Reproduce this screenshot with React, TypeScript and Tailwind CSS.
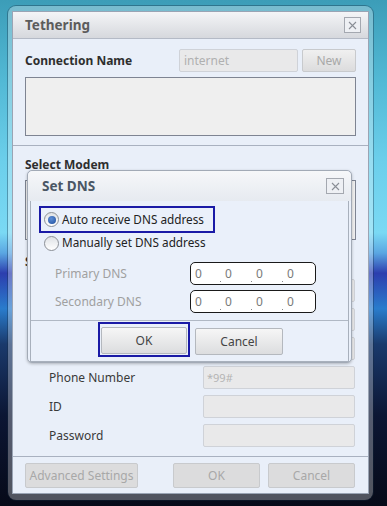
import React from 'react';

const font = "font-['Noto_Sans','Open_Sans',sans-serif]";

const CloseBox = ({ className = "" }: { className?: string }) => (
  <div className={`flex items-center justify-center border border-[#a4a8b0] bg-[#eef0f4] ${className}`}>
    <svg width="9" height="9" viewBox="0 0 9 9">
      <path d="M1 1 L8 8 M8 1 L1 8" stroke="#8a8e96" strokeWidth="1.1" fill="none" />
    </svg>
  </div>
);

const Field = ({ value = "" }: { value?: string }) => (
  <div className="w-[152px] h-[23px] rounded-[2px] border border-[#cfd2d8] bg-[#e9e9ea] px-[3px] text-[11px] leading-[21px] text-[#b4b4b4]">
    {value}
  </div>
);

const Radio = ({ checked }: { checked?: boolean }) => (
  <span className="flex w-[15px] h-[15px] shrink-0 items-center justify-center rounded-full border border-[#8c9096] bg-[linear-gradient(180deg,#dfe2e6,#ffffff)]">
    {checked && <span className="w-[8px] h-[8px] rounded-full bg-[radial-gradient(circle_at_40%_35%,#5d8ed6,#1f4f9e)]" />}
  </span>
);

const IpBox = () => (
  <div className="flex w-[126px] h-[23px] items-center rounded-[5px] border-[1.5px] border-[#1a1a1a] bg-white pl-[4px] text-[12px] text-[#7a7a7a]">
    <span className="w-[25px]">0</span>
    {[0, 1, 2].map((i) => (
      <span key={i} className="flex w-[31px] items-end">
        <span className="mr-[4px] mb-[1px] w-[1px] h-[1px] bg-[#8a8a8a] self-end" />
        <span>0</span>
      </span>
    ))}
  </div>
);

const btn =
  "flex items-center justify-center rounded-[2px] border border-[#b4b8be] bg-[linear-gradient(180deg,#f6f6f6,#dcdddf)] text-[12px] text-[#444]";
const btnOff =
  "flex items-center justify-center rounded-[2px] border border-[#c8cacd] bg-[#dcdcdd] text-[12px] text-[#a8a8a8]";

export default function App() {
  // first three rows sit under the Set DNS dialog, their labels are not visible
  const rows = ["", "", "", "Phone Number", "ID", "Password"];
  return (
    <div
      className={`relative w-[387px] h-[506px] overflow-hidden pt-[6px] pl-[8px] ${font} bg-[linear-gradient(180deg,#3c9db8_0%,#52b9d5_16%,#6ccfeb_32%,#7ad9f4_46%,#5aa6e2_50%,#2c3eae_54%,#2a7ccc_61%,#1a3a6c_68%,#0c1634_82%,#060a18_100%)]`}
    >
      {/* outer window frame */}
      <div className="w-[365px] h-[494px] rounded-[8px] bg-white/30 px-[4px] py-[5px] shadow-[0_0_0_1px_rgba(20,40,60,0.35)]">
        <div className="flex flex-col w-[357px] h-[483px] bg-[#e9eff9] border border-[#9aa4b4]">
          {/* title bar */}
          <div className="flex h-[27px] shrink-0 items-center justify-between border-b border-[#b4bac6] bg-[linear-gradient(180deg,#f4f5f7,#d6d8dd)] pl-[12px] pr-[7px]">
            <span className="text-[13.5px] font-bold text-[#5c5c5c]">Tethering</span>
            <CloseBox className="w-[17px] h-[16px]" />
          </div>

          {/* connection name */}
          <div className="px-[12px] pt-[10px]">
            <div className="flex h-[23px] items-center">
              <span className="w-[154px] text-[12px] font-bold text-[#2e2e2e]">Connection Name</span>
              <div className="w-[119px] h-[23px] rounded-[2px] border border-[#cfd2d8] bg-[#e9e9ea] px-[4px] text-[12px] leading-[21px] text-[#b0b0b0]">
                internet
              </div>
              <div className={`${btnOff} ml-[4px] w-[54px] h-[23px] bg-[linear-gradient(180deg,#f0f0f0,#dcdcdd)] text-[#9a9a9a]`}>New</div>
            </div>
            <div className="mt-[5px] h-[59px] w-[331px] border border-[#7e8492] bg-[#efefef]" />
          </div>
          <div className="mt-[9px] h-px bg-[#a9b1c0]" />

          {/* select modem */}
          <div className="px-[12px] pt-[11px]">
            <div className="h-[16px] text-[12px] font-bold leading-[16px] text-[#2e2e2e]">Select Modem</div>
            <div className="mt-[7px] h-[60px] w-[331px] border border-[#7e8492] bg-[#efefef]" />
            <div className="mt-[14px] h-[16px] text-[12px] font-bold leading-[16px] text-[#2e2e2e]">Settings</div>
            <div className="mt-[9px] flex flex-col gap-[6px]">
              {rows.map((r, i) => (
                <div key={i} className="flex h-[23px] items-center">
                  <span className="w-[178px] pl-[24px] text-[12px] text-[#3a3a3a]">{r}</span>
                  <Field value={i === 3 ? "*99#" : ""} />
                </div>
              ))}
            </div>
          </div>
          <div className="mt-[9px] h-px bg-[#a9b1c0]" />

          {/* bottom buttons */}
          <div className="flex px-[12px] pt-[6px]">
            <div className={`${btnOff} w-[113px] h-[25px] text-[#888]`}>Advanced Settings</div>
            <div className={`${btnOff} ml-[35px] w-[87px] h-[25px]`}>OK</div>
            <div className={`${btnOff} ml-[8px] w-[87px] h-[25px]`}>Cancel</div>
          </div>
        </div>
      </div>

      {/* Set DNS modal */}
      <div className="absolute left-[27px] top-[170px] flex flex-col w-[325px] h-[193px] rounded-[5px] border border-[#a2aab6] bg-[#eaf0fa] shadow-[0_1px_3px_rgba(0,0,0,0.25)]">
        <div className="flex h-[30px] shrink-0 items-center justify-between rounded-t-[5px] bg-[linear-gradient(180deg,#f6f7f9,#e6eaf0)] pl-[14px] pr-[7px]">
          <span className="text-[13.5px] font-bold text-[#4a5664]">Set DNS</span>
          <CloseBox className="w-[18px] h-[16px]" />
        </div>
        <div className="mx-[2px] flex flex-1 flex-col border-x border-b border-[#a8b0bc]">
          <div className="pl-[8px] pt-[5px]">
            <div className="flex w-[176px] h-[27px] items-center gap-[3px] border-2 border-[#1a1aa6] pl-[3px]">
              <Radio checked />
              <span className="text-[11.75px] text-[#222]">Auto receive DNS address</span>
            </div>
            <div className="flex h-[20px] items-center gap-[3px] pl-[5px]">
              <Radio />
              <span className="text-[11.75px] text-[#222]">Manually set DNS address</span>
            </div>
            <div className="mt-[9px] flex flex-col gap-[5px]">
              {["Primary DNS", "Secondary DNS"].map((l) => (
                <div key={l} className="flex h-[23px] items-center">
                  <span className="w-[151px] pl-[16px] text-[12px] leading-[15px] text-[#a0a0a0]">{l}</span>
                  <IpBox />
                </div>
              ))}
            </div>
          </div>
          <div className="mt-[7px] h-px bg-[#b0b8c4]" />
          <div className="flex flex-1 items-start pl-[67px] pt-[1px]">
            <div className="flex w-[92px] h-[35px] items-end justify-center border-2 border-[#1a1aa6] pb-[1px]">
              <div className={`${btn} w-[86px] h-[27px]`}>OK</div>
            </div>
            <div className={`${btn} ml-[5px] mt-[6px] w-[88px] h-[27px]`}>Cancel</div>
          </div>
        </div>
      </div>
    </div>
  );
}
